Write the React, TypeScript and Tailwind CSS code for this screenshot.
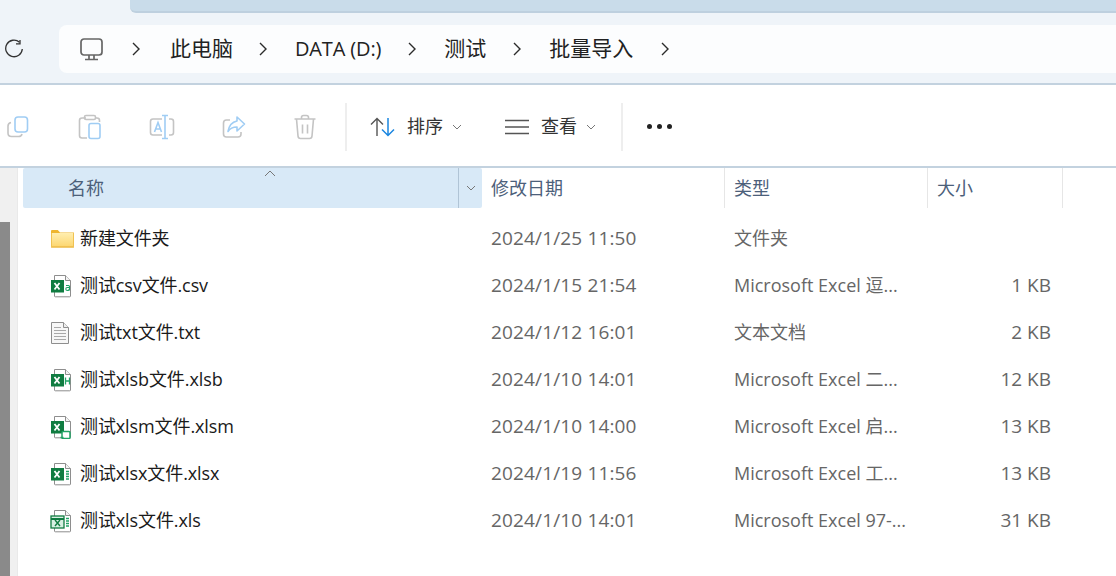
const font = { fontFamily: '"Open Sans", "Noto Sans CJK SC", sans-serif' };

function Chevron() {
  return (
    <svg width="8" height="14" viewBox="0 0 8 14" fill="none" stroke="#2b2b2b" strokeWidth="1.4">
      <path d="M1 1l6 6-6 6" />
    </svg>
  );
}

function SmallCaret() {
  return (
    <svg width="10" height="6" viewBox="0 0 10 6" fill="none" stroke="#777" strokeWidth="1">
      <path d="M1 1l4 4 4-4" />
    </svg>
  );
}

function CopyIcon() {
  return (
    <svg width="24" height="24" viewBox="0 0 24 24" fill="none" strokeWidth="1.6">
      <path d="M5 7.500C3 8 2 9 2 11v7c0 2.200 1.300 3.500 3.500 3.500h7c2 0 3.200-1 3.500-2.500" stroke="#c4c4c4" />
      <rect x="9" y="2" width="12.500" height="15" rx="3" stroke="#a0cdf4" />
    </svg>
  );
}

function PasteIcon() {
  return (
    <svg width="24" height="26" viewBox="0 0 24 26" fill="none" strokeWidth="1.6">
      <path d="M8 4H4C2.500 4 1.500 5 1.500 6.500v15C1.500 23 2.500 24 4 24h5M17 4h2c1.500 0 2.500 1 2.500 2.500V8" stroke="#c4c4c4" />
      <rect x="6.500" y="1.500" width="11" height="4" rx="1.500" stroke="#c4c4c4" />
      <rect x="11" y="9.500" width="11" height="15" rx="2" stroke="#a0cdf4" />
    </svg>
  );
}

function RenameIcon() {
  return (
    <svg width="26" height="26" viewBox="0 0 26 26" fill="none" strokeWidth="1.6">
      <path d="M13 5H4C2.500 5 1.500 6 1.500 7.500v11C1.500 20 2.500 21 4 21h9M20 5h2c1.500 0 2.500 1 2.500 2.500v11c0 1.500-1 2.500-2.500 2.500h-2" stroke="#c4c4c4" />
      <path d="M13 1.500h6M16 1.500v23M13 24.500h6" stroke="#a0cdf4" />
      <path d="M5.500 18l3.500-9.500 3.500 9.500M7 15h4" stroke="#a0cdf4" />
    </svg>
  );
}

function ShareIcon() {
  return (
    <svg width="24" height="24" viewBox="0 0 24 24" fill="none" strokeWidth="1.6">
      <path d="M8 5H4.500C2.800 5 1.500 6.300 1.500 8v11c0 1.700 1.300 3 3 3H16c1.700 0 3-1.300 3-3v-2" stroke="#c4c4c4" />
      <path d="M15 2l7.500 7-7.500 7v-4c-4 0-7 1.300-9 4.500C7 10.500 10 7 15 6z" stroke="#a0cdf4" strokeLinejoin="round" />
    </svg>
  );
}

function TrashIcon() {
  return (
    <svg width="24" height="26" viewBox="0 0 24 26" fill="none" stroke="#c4c4c4" strokeWidth="1.6">
      <path d="M1.500 5h21M8.500 5V3.500C8.500 2.300 9.500 1.500 10.500 1.500h3c1 0 2 .8 2 2V5M3.500 5l1.500 17c.1 1.500 1.200 2.500 2.500 2.500h9c1.300 0 2.400-1 2.500-2.500L20.500 5M9.500 10.500v9M14.500 10.500v9" />
    </svg>
  );
}

function SortIcon() {
  return (
    <svg width="26" height="20" viewBox="0 0 26 20" fill="none" strokeWidth="1.5">
      <path d="M7 19V1.500M1 7.500L7 1.500l6 6" stroke="#555" strokeWidth="1.400" />
      <path d="M18 1v17.500M12 12.500l6 6 6-6" stroke="#1a86e0" />
    </svg>
  );
}

function DocBase({ children }: { children?: React.ReactNode }) {
  return (
    <svg width="22" height="24" viewBox="0 0 22 24" fill="none">
      <path d="M4.500 1.500h11l5 5v15.500a.8.800 0 0 1-.8.800H5.300a.8.800 0 0 1-.8-.800z" fill="#fff" stroke="#8e8e8e" />
      <path d="M15.500 1.500v5h5" fill="#f4f4f4" stroke="#8e8e8e" />
      {children}
    </svg>
  );
}

function Badge() {
  return (
    <>
      <rect x="1" y="6" width="13" height="12.500" fill="#107c41" />
      <path d="M4.500 9l5 6.500M9.500 9l-5 6.500" stroke="#fff" strokeWidth="1.800" />
    </>
  );
}

function CsvIcon() {
  return (
    <DocBase>
      <Badge />
      <path d="M16 11.500h2.500c.6 0 1 .4 1 1V16.500M19.500 13.500h-2.200c-.9 0-1.500.6-1.500 1.500s.6 1.500 1.500 1.500c1 0 2.200-.6 2.200-2" stroke="#21a366" strokeWidth="1.100" />
    </DocBase>
  );
}

function TxtIcon() {
  return (
    <svg width="20" height="24" viewBox="0 0 20 24" fill="none">
      <path d="M1.500 1.500h12l5 5v16h-17z" fill="#f7f7f7" stroke="#8e8e8e" />
      <path d="M13.500 1.500v5h5" fill="#eee" stroke="#8e8e8e" />
      <path d="M4 6.500h7M4 9.500h12M4 12.500h12M4 15.500h12M4 18.500h12" stroke="#a9a9a9" />
    </svg>
  );
}

function XlsbIcon() {
  return (
    <DocBase>
      <Badge />
      <path d="M15.500 9.500v7M19.500 9.500v7M15.500 13h4" stroke="#21a366" strokeWidth="1.300" />
    </DocBase>
  );
}

function XlsmIcon() {
  return (
    <DocBase>
      <Badge />
      <rect x="12" y="16.500" width="8" height="7" rx="1" fill="#fff" stroke="#21a366" strokeWidth="1.500" />
      <path d="M10.500 22.500h3" stroke="#21a366" strokeWidth="1.500" />
    </DocBase>
  );
}

function XlsxIcon() {
  return (
    <DocBase>
      <Badge />
      <path d="M16 9.500h3M16 12h3M16 14.500h3M16 17h3" stroke="#21a366" strokeWidth="1.400" />
    </DocBase>
  );
}

function XlsIcon() {
  return (
    <DocBase>
      <rect x="1" y="7" width="13" height="12" fill="#d7f0e2" stroke="#107c41" strokeWidth="1.300" />
      <path d="M1 10h13" stroke="#107c41" strokeWidth="2" />
      <path d="M5 11l5 6M10 11l-5 6" stroke="#107c41" strokeWidth="1.400" />
      <path d="M16 9.500h3M16 12h3M16 14.500h3M16 17h3" stroke="#21a366" strokeWidth="1.400" />
    </DocBase>
  );
}

function FolderIcon() {
  return (
    <svg className="ml-[1px]" width="23" height="18" viewBox="0 0 23 18" fill="none">
      <defs>
        <linearGradient id="folderFill" x1="0" y1="0" x2="0" y2="1">
          <stop offset="0" stopColor="#ffeeb0" />
          <stop offset="1" stopColor="#fcd56c" />
        </linearGradient>
      </defs>
      <path d="M0 1.200C0 .5.500 0 1.200 0h5.600L9 2.500h13.800c0 0 .2 0 .2.200V4H0z" fill="#eeb52f" />
      <rect x="0" y="3" width="23" height="14.500" rx=".8" fill="url(#folderFill)" />
      <path d="M0 17h23" stroke="#e4ab33" />
      <path d="M.5 3v14M22.500 3v14" stroke="#f0c252" />
    </svg>
  );
}

const rows = [
  { icon: <FolderIcon />, name: "新建文件夹", date: "2024/1/25 11:50", type: "文件夹", size: "" },
  { icon: <CsvIcon />, name: "测试csv文件.csv", date: "2024/1/15 21:54", type: "Microsoft Excel 逗...", size: "1 KB" },
  { icon: <TxtIcon />, name: "测试txt文件.txt", date: "2024/1/12 16:01", type: "文本文档", size: "2 KB" },
  { icon: <XlsbIcon />, name: "测试xlsb文件.xlsb", date: "2024/1/10 14:01", type: "Microsoft Excel 二...", size: "12 KB" },
  { icon: <XlsmIcon />, name: "测试xlsm文件.xlsm", date: "2024/1/10 14:00", type: "Microsoft Excel 启...", size: "13 KB" },
  { icon: <XlsxIcon />, name: "测试xlsx文件.xlsx", date: "2024/1/19 11:56", type: "Microsoft Excel 工...", size: "13 KB" },
  { icon: <XlsIcon />, name: "测试xls文件.xls", date: "2024/1/10 14:01", type: "Microsoft Excel 97-...", size: "31 KB" },
];

export default function App() {
  return (
    <div className="flex h-[576px] w-[1116px] flex-col overflow-hidden bg-white" style={font}>
      {/* tab strip + address bar */}
      <div className="h-[85px] shrink-0 border-b-2 border-[#c3d2df] bg-[#eff4f9]">
        <div className="ml-[130px] h-[13px] rounded-bl-[6px] border-b-2 border-[#bed0df] bg-[#c9dcea]" />
        <div className="mt-3 flex items-center">
          <div className="flex w-[59px] justify-start pl-[4px]">
            <svg width="20" height="20" viewBox="0 0 20 20" fill="none" stroke="#333" strokeWidth="1.300">
              <path d="M15.500 3.200A8.300 8.300 0 1 0 18.300 10" />
              <path d="M16 1v3.800h-4" />
            </svg>
          </div>
          <div className="flex h-[48px] flex-1 items-center rounded-l-[8px] bg-[#fcfdfe] text-[21px] text-[#222]">
            <svg className="ml-[21px]" width="23" height="23" viewBox="0 0 23 23" fill="none" stroke="#666" strokeWidth="1.700">
              <rect x="1" y="1" width="21" height="16" rx="3" />
              <path d="M9 17v4M14 17v4M5 21.500h13" />
            </svg>
            <div className="ml-[29px]"><Chevron /></div>
            <span className="ml-[30px]">此电脑</span>
            <div className="ml-[26px]"><Chevron /></div>
            <span className="ml-[28px] text-[20px] tracking-[-0.15px]">DATA (D:)</span>
            <div className="ml-[27px]"><Chevron /></div>
            <span className="ml-[28px]">测试</span>
            <div className="ml-[27px]"><Chevron /></div>
            <span className="ml-[28px]">批量导入</span>
            <div className="ml-[28px]"><Chevron /></div>
          </div>
        </div>
      </div>

      {/* command bar */}
      <div className="flex h-[83px] shrink-0 items-center border-b-2 border-[#c3d2df] pt-[2px]">
        <div className="ml-[6px] flex w-[339px] items-center">
          <div className="w-[72px]"><CopyIcon /></div>
          <div className="w-[71px]"><PasteIcon /></div>
          <div className="w-[73px]"><RenameIcon /></div>
          <div className="w-[71px]"><ShareIcon /></div>
          <div><TrashIcon /></div>
        </div>
        <div className="h-[48px] w-[2px] bg-[#eeeeee]" />
        <div className="ml-[23px]"><SortIcon /></div>
        <span className="ml-[11px] text-[18px] text-[#333]">排序</span>
        <div className="ml-[9px]"><SmallCaret /></div>
        <svg className="ml-[43px]" width="24" height="16" viewBox="0 0 24 16" fill="none" stroke="#555" strokeWidth="1.500">
          <path d="M0 1.500h24M0 8h24M0 14.500h24" />
        </svg>
        <span className="ml-[12px] text-[18px] text-[#333]">查看</span>
        <div className="ml-[9px]"><SmallCaret /></div>
        <div className="ml-[25px] h-[48px] w-[2px] bg-[#eeeeee]" />
        <div className="ml-[24px] flex gap-[5px]">
          <span className="h-[5px] w-[5px] rounded-full bg-[#222]" />
          <span className="h-[5px] w-[5px] rounded-full bg-[#222]" />
          <span className="h-[5px] w-[5px] rounded-full bg-[#222]" />
        </div>
      </div>

      {/* file list */}
      <div className="flex flex-1">
        <div className="flex w-[18px] flex-col border-r border-[#e9e9e9] bg-[#f0f0f0]">
          <div className="mt-[54px] w-[10px] flex-1 bg-[#8a8a8a]" />
        </div>
        <div className="min-w-0 flex-1 pl-[5px]">
          <div className="grid h-[40px] grid-cols-[459px_242px_203px_136px] text-[18px] text-[#4c607a]">
            <div className="relative flex items-center rounded-[2px] bg-[#d8e9f7]">
              <span className="pl-[45px]">名称</span>
              <svg className="absolute left-[241px] top-[2px]" width="12" height="7" viewBox="0 0 12 7" fill="none" stroke="#777" strokeWidth="1">
                <path d="M1 6l5-5 5 5" />
              </svg>
              <div className="absolute right-0 top-0 flex h-full w-[24px] items-center justify-center border-l border-[#b0c4d6]">
                <SmallCaret />
              </div>
            </div>
            <div className="flex items-center pl-[9px]">修改日期</div>
            <div className="flex items-center border-l border-[#e6e6e6] pl-[9px]">类型</div>
            <div className="flex items-center border-x border-[#e6e6e6] pl-[9px]">大小</div>
          </div>
          <div className="pt-[7px]">
            {rows.map((r) => (
              <div key={r.name} className="grid h-[47px] grid-cols-[459px_242px_203px_136px] items-center text-[18px]">
                <div className="flex items-center">
                  <div className="flex w-[57px] justify-start pl-[27px]">{r.icon}</div>
                  <span className="tracking-[-0.1px] text-[#1a1a1a]">{r.name}</span>
                </div>
                <div className="pl-[9px] text-[19px] tracking-[0.15px] text-[#666]">{r.date}</div>
                <div className="pl-[10px] text-[#666]">{r.type}</div>
                <div className="pr-[12px] text-right text-[19px] text-[#666]">{r.size}</div>
              </div>
            ))}
          </div>
        </div>
      </div>
    </div>
  );
}
